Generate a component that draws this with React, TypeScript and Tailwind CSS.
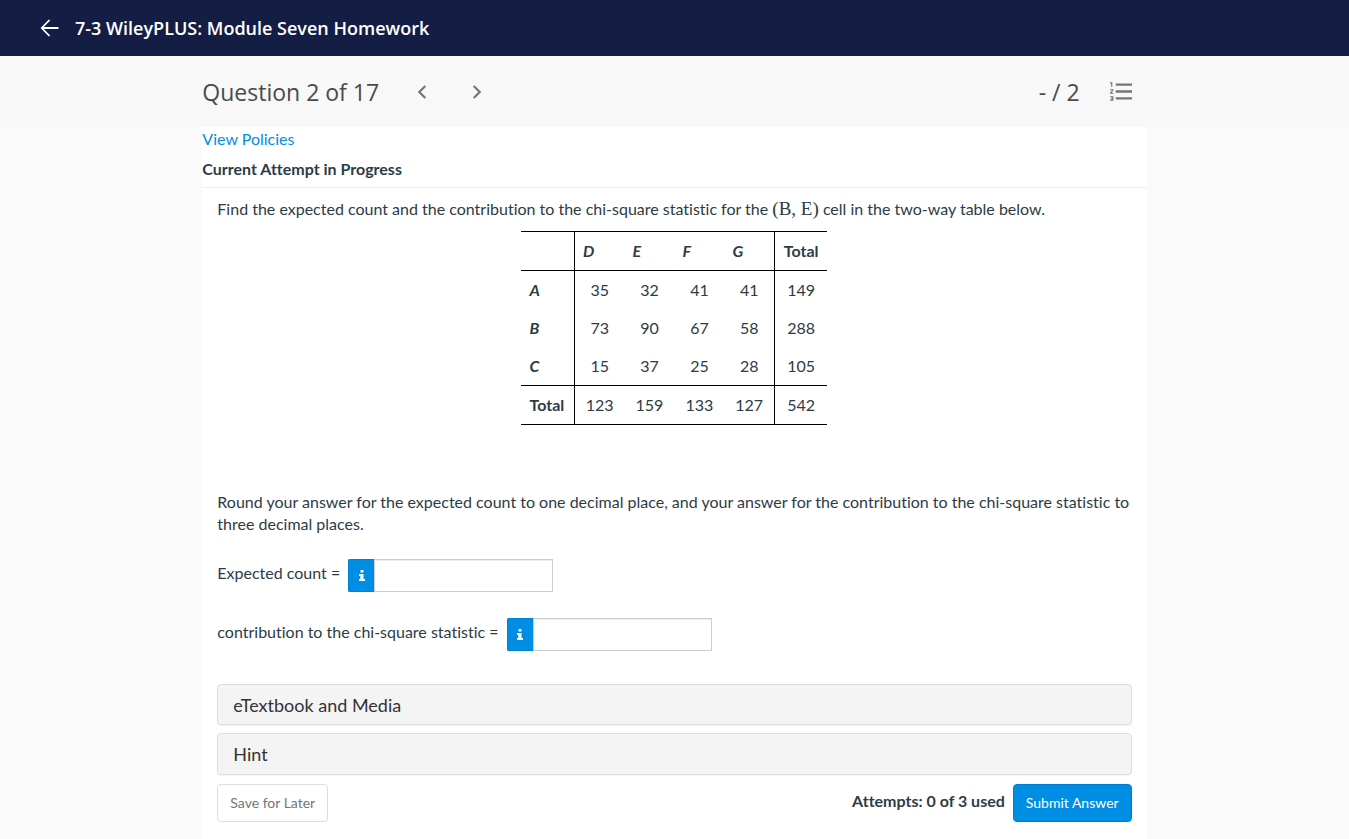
import { useState } from 'react';

const columns = ['D', 'E', 'F', 'G'];

const rows = [
    { label: 'A', values: [35, 32, 41, 41], total: 149 },
    { label: 'B', values: [73, 90, 67, 58], total: 288 },
    { label: 'C', values: [15, 37, 25, 28], total: 105 },
];

const totals = [123, 159, 133, 127];

type AnswerFieldProps = {
    id: string;
    label: string;
};

function AnswerField({ id, label }: AnswerFieldProps) {
    const [value, setValue] = useState('');

    return (
        <div className="flex items-start">
            <label htmlFor={id} className="mr-2 pt-[3px]">{label}</label>
            <button
                type="button"
                aria-label={`Info: ${label}`}
                className="flex h-[33px] w-[26px] items-center justify-center rounded-l-xs border border-r-0 border-[#0081d1] bg-[#008ee5]"
            >
                <svg width="6" height="11" viewBox="0 0 6 11" fill="white" aria-hidden="true">
                    <path d="M1.5 0h3v2.4h-3zM0 4h4.5v5H6v2H0V9h1.3V6H0z" />
                </svg>
            </button>
            <input
                id={id}
                type="text"
                value={value}
                onChange={(e) => setValue(e.target.value)}
                className="h-[33px] w-[179px] border border-[#ccc] bg-white px-2 shadow-[inset_0_1px_1px_rgba(0,0,0,0.075)] outline-none"
            />
        </div>
    );
}

function DataTable() {
    return (
        <table className="mx-auto border-collapse border-y border-black leading-[22px]">
            <thead>
                <tr className="border-b border-black">
                    <td className="w-[53px] border-r border-black p-2"></td>
                    {columns.map((column) => (
                        <th key={column} scope="col" className="w-[50px] p-2 text-left font-bold italic">{column}</th>
                    ))}
                    <th scope="col" className="w-[53px] border-l border-black p-2 font-bold">Total</th>
                </tr>
            </thead>
            <tbody>
                {rows.map((row) => (
                    <tr key={row.label}>
                        <th scope="row" className="border-r border-black p-2 text-left font-bold italic">{row.label}</th>
                        {row.values.map((value, i) => (
                            <td key={i} className="p-2 text-center">{value}</td>
                        ))}
                        <td className="border-l border-black p-2 text-center">{row.total}</td>
                    </tr>
                ))}
                <tr className="border-t border-black">
                    <th scope="row" className="border-r border-black p-2 text-left font-bold">Total</th>
                    {totals.map((value, i) => (
                        <td key={i} className="p-2 text-center">{value}</td>
                    ))}
                    <td className="border-l border-black p-2 text-center">542</td>
                </tr>
            </tbody>
        </table>
    );
}

export default function App() {
    return (
        <div className="flex min-h-screen flex-col bg-[#fafafa] font-['Lato',sans-serif] text-base leading-[22px] text-[#2d3b45] [font-variant-ligatures:none]">
            <header className="flex h-14 items-center bg-[#141e44] pl-10 font-['Open_Sans',sans-serif] text-white">
                <a href="#" aria-label="Back" className="mr-4">
                    <svg width="19" height="18" viewBox="0 0 19 18" fill="none" stroke="currentColor" strokeWidth="1.8" aria-hidden="true">
                        <path d="M9.5 1L1.8 9l7.7 8M2 9h16.5" />
                    </svg>
                </a>
                <h1 className="text-lg font-semibold">7-3 WileyPLUS: Module Seven Homework</h1>
            </header>

            <div className="bg-[#f8f8f8]">
                <div className="mx-auto flex h-[71px] w-[70%] items-center pr-[15px] font-['Open_Sans',sans-serif] text-[23px] text-[#4a4a4a]">
                    <h2>Question 2 of 17</h2>
                    <button type="button" aria-label="Previous question" className="ml-[38px] text-[#757575]">
                        <svg width="10" height="14" viewBox="0 0 10 14" fill="none" stroke="currentColor" strokeWidth="2.2" aria-hidden="true">
                            <path d="M8.3 1L2.3 7l6 6" />
                        </svg>
                    </button>
                    <button type="button" aria-label="Next question" className="ml-[45px] text-[#757575]">
                        <svg width="10" height="14" viewBox="0 0 10 14" fill="none" stroke="currentColor" strokeWidth="2.2" aria-hidden="true">
                            <path d="M1.7 1l6 6l-6 6" />
                        </svg>
                    </button>
                    <span className="ml-auto">- / 2</span>
                    <button type="button" aria-label="Question list" className="ml-[30px] text-[#757575]">
                        <svg width="22" height="19" viewBox="2 4 19 16" fill="currentColor" aria-hidden="true">
                            <path d="M2 17h2v.5H3v1h1v.5H2v1h3v-4H2v1zm1-9h1V4H2v1h1v3zm-1 3h1.8L2 13.1v.9h3v-1H3.2L5 10.900V10H2v1zm5-6v2h14V5H7zm0 14h14v-2H7v2zm0-6h14v-2H7v2z" />
                        </svg>
                    </button>
                </div>
            </div>

            <main className="mx-auto w-[70%] grow bg-white">
                <div className="border-b border-[#eee] pt-px pb-[7px]">
                    <a href="#" className="text-[#008ee5]">View Policies</a>
                    <h3 className="mt-2 font-bold">Current Attempt in Progress</h3>
                </div>

                <div className="px-[15px] pt-[10px]">
                    <p>
                        Find the expected count and the contribution to the chi-square statistic for the{' '}
                        <span className="font-['Liberation_Serif',serif] text-[19px]">(B, E)</span> cell in the two-way table below.
                    </p>
                    <div className="mt-[11px] mb-[66px]">
                        <DataTable />
                    </div>
                    <p>
                        Round your answer for the expected count to one decimal place, and your answer for the contribution to the
                        chi-square statistic to three decimal places.
                    </p>
                    <div className="mt-6 mb-[33px] flex flex-col gap-[26px]">
                        <AnswerField id="expected" label="Expected count =" />
                        <AnswerField id="contribution" label="contribution to the chi-square statistic =" />
                    </div>

                    <div className="flex flex-col gap-2 text-lg text-[#333]">
                        <button type="button" className="h-[41px] rounded-sm border border-[#ddd] bg-[#f4f4f4] px-[15px] text-left shadow-[0_1px_1px_rgba(0,0,0,0.05)]">
                            eTextbook and Media
                        </button>
                        <button type="button" className="h-[42px] rounded-sm border border-[#ddd] bg-[#f4f4f4] px-[15px] text-left shadow-[0_1px_1px_rgba(0,0,0,0.05)]">
                            Hint
                        </button>
                    </div>

                    <div className="mt-[9px] flex items-center pb-4">
                        <button type="button" className="h-[38px] rounded-sm border border-[#ddd] bg-white px-3 text-sm text-[#757575]">
                            Save for Later
                        </button>
                        <span className="mr-2 mb-1 ml-auto font-bold">Attempts: 0 of 3 used</span>
                        <button type="button" className="h-[38px] rounded-sm border border-[#007dcc] bg-[#008ee5] px-3 text-sm text-white">
                            Submit Answer
                        </button>
                    </div>
                </div>
            </main>
        </div>
    );
}
